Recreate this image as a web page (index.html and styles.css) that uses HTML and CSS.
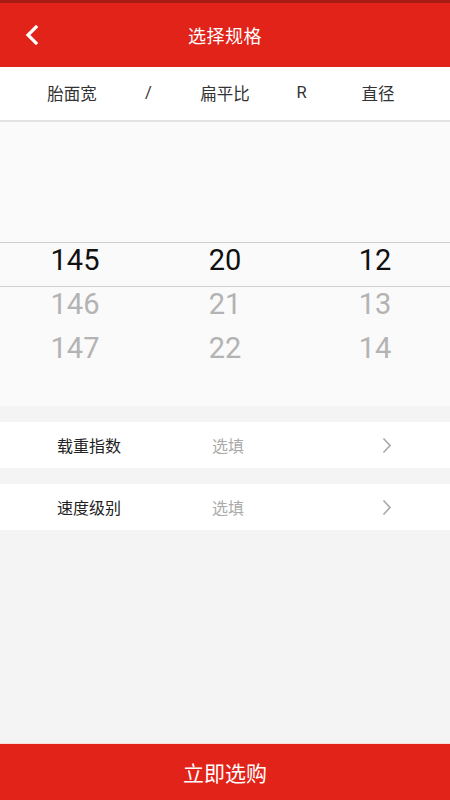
FILE: index.html
```html
<!DOCTYPE html>
<html lang="zh">
<head>
<meta charset="utf-8">
<link rel="stylesheet" href="styles.css">
</head>
<body>
<div class="app">
  <header class="topbar">
    <div class="status"></div>
    <div class="nav">
      <span class="back"><svg width="14" height="20" viewBox="0 0 14 20"><path d="M11 2 L3 10 L11 18" fill="none" stroke="#fff" stroke-width="3.2" stroke-linecap="square"/></svg></span>
      <h1 class="title">选择规格</h1>
    </div>
  </header>
  <div class="cols">
    <span>胎面宽</span><span>/</span><span>扁平比</span><span>R</span><span>直径</span>
  </div>
  <div class="picker">
    <div class="prow"><span></span><span></span><span></span></div>
    <div class="prow"><span></span><span></span><span></span></div>
    <div class="prow sel"><span>145</span><span>20</span><span>12</span></div>
    <div class="prow dim"><span>146</span><span>21</span><span>13</span></div>
    <div class="prow dim"><span>147</span><span>22</span><span>14</span></div>
  </div>
  <div class="opts">
    <div class="opt"><span class="lbl">载重指数</span><span class="hint">选填</span><svg class="arr" width="10" height="17" viewBox="0 0 10 17"><path d="M1.5 1.5 L8 8.5 L1.5 15.5" fill="none" stroke="#aaa" stroke-width="1.7"/></svg></div>
    <div class="opt"><span class="lbl">速度级别</span><span class="hint">选填</span><svg class="arr" width="10" height="17" viewBox="0 0 10 17"><path d="M1.5 1.5 L8 8.5 L1.5 15.5" fill="none" stroke="#aaa" stroke-width="1.7"/></svg></div>
  </div>
  <div class="spacer"></div>
  <button class="buy">立即选购</button>
</div>
</body>
</html>
```
FILE: styles.css
```css
* { box-sizing: border-box; margin: 0; padding: 0; }
html, body { width: 450px; height: 800px; overflow: hidden; }
body { font-family: Roboto, "Noto Sans CJK SC", sans-serif; background: #f4f4f4; }
.app { display: flex; flex-direction: column; height: 800px; }
.topbar { background: #e1231a; height: 67px; display: flex; flex-direction: column; }
.status { height: 3px; background: #a81c16; }
.nav { flex: 1; display: flex; align-items: center; justify-content: center; position: relative; }
.back { position: absolute; left: 25px; top: 22px; display: flex; }
.title { font-size: 18px; font-weight: normal; color: #fff; letter-spacing: 0.5px; }
.cols { height: 55px; background: #fff; border-bottom: 2px solid #e2e2e2; display: grid; grid-template-columns: repeat(5, 76.5px); padding: 0 33.75px; align-items: center; justify-items: center; font-size: 16.5px; color: #333; }
.cols span { margin-top: -2px; }
.picker { background: #fafafa; padding-bottom: 31px; }
.prow { height: 44px; display: grid; grid-template-columns: repeat(3, 150px); align-items: center; justify-items: center; font-size: 29px; color: #111; }
.prow span { margin-top: -10px; }
.prow:first-child { margin-top: 32px; }
.prow.sel { border-top: 1px solid #cfcfcf; border-bottom: 1px solid #cfcfcf; height: 45px; }
.prow.dim { color: #b3b3b3; }
.opts { padding-top: 16px; display: flex; flex-direction: column; gap: 16px; }
.opt { height: 46px; background: #fff; display: flex; align-items: center; padding-left: 57px; font-size: 16px; }
.lbl { width: 155px; color: #222; }
.hint { color: #aaa; flex: 1; }
.arr { margin-right: 58px; }
.spacer { flex: 1; }
.buy { height: 57px; border: none; border-top: 1px solid #f8dcdb; background: #e1231a; color: #fff; font-size: 21px; font-family: inherit; }
```
